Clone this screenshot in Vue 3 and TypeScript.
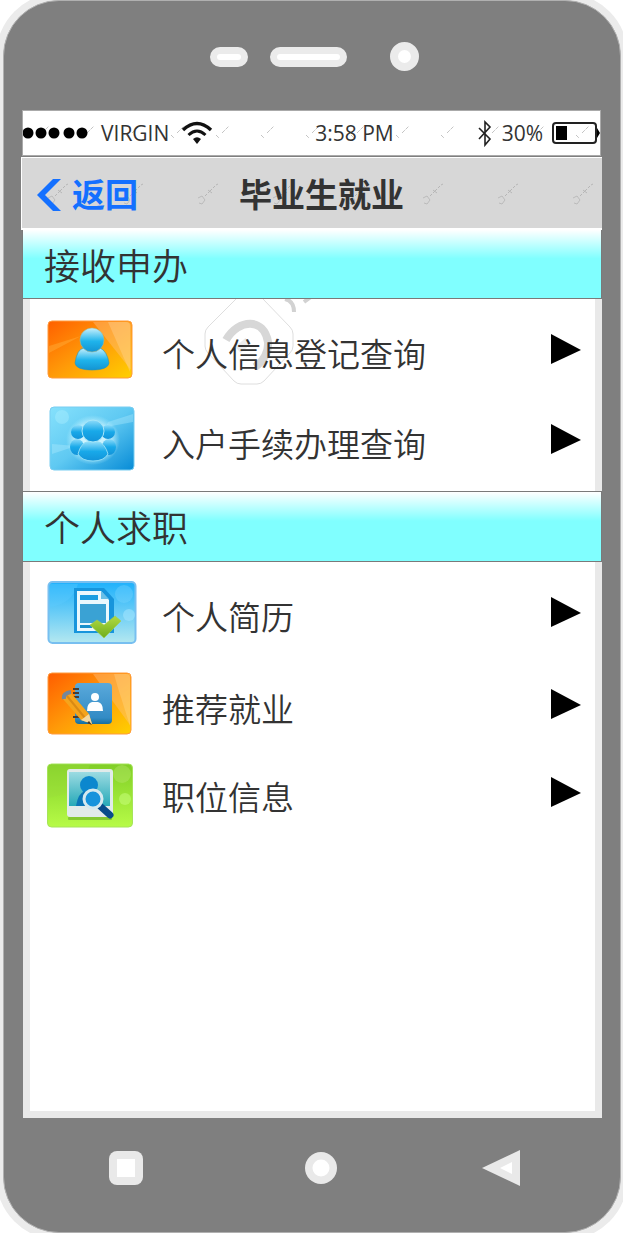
<script setup lang="ts">
interface Entry {
  id: string
  label: string
}
interface Section {
  title: string
  size: 'compact' | 'roomy'
  entries: Entry[]
}

const sections: Section[] = [
  {
    title: '接收申办',
    size: 'compact',
    entries: [
      { id: 'person', label: '个人信息登记查询' },
      { id: 'group', label: '入户手续办理查询' },
    ],
  },
  {
    title: '个人求职',
    size: 'roomy',
    entries: [
      { id: 'resume', label: '个人简历' },
      { id: 'recommend', label: '推荐就业' },
      { id: 'position', label: '职位信息' },
    ],
  },
]
</script>

<template>
  <div class="stage">
    <div class="phone">
      <div class="bezel-top">
        <span class="slot short"></span>
        <span class="slot long"></span>
        <span class="lens"></span>
      </div>

      <main class="screen">
        <div class="status">
          <svg class="marks" aria-hidden="true">
            <defs>
              <pattern id="ticks" width="45" height="44" patternUnits="userSpaceOnUse" x="12" y="0">
                <path d="M1 24l3 3M7 22l7-7" stroke="#c4c4c4" stroke-width="1" stroke-dasharray="4 1" fill="none" />
              </pattern>
            </defs>
            <rect width="100%" height="100%" fill="url(#ticks)" />
          </svg>
          <div class="carrier">
            <svg width="68" height="14" viewBox="0 0 68 14" aria-hidden="true">
              <circle cx="5" cy="7" r="5.5" /><circle cx="18" cy="7" r="5.5" /><circle cx="31" cy="7" r="5.5" />
              <circle cx="46" cy="7" r="5.5" /><circle cx="59" cy="7" r="5.5" />
            </svg>
            <span class="operator">VIRGIN</span>
            <svg width="32" height="24" viewBox="0 0 32 24" fill="none" stroke="#111" aria-hidden="true">
              <path d="M2 9Q16-4 30 9" stroke-width="3.4" />
              <path d="M7.500 14Q16 6 24.500 14" stroke-width="3" />
              <path d="M16 23l-4-5q4-3.500 8 0z" fill="#111" stroke="none" />
            </svg>
          </div>
          <span class="clock">3:58 PM</span>
          <div class="power">
            <svg width="16" height="27" viewBox="0 0 16 27" fill="none" stroke="#222" stroke-width="1.600" aria-hidden="true">
              <path d="M2 8l11 11-5 6V2l5 5L2 19" />
            </svg>
            <span>30%</span>
            <svg width="48" height="24" viewBox="0 0 48 24" aria-hidden="true">
              <rect x="1" y="2" width="43" height="20" rx="3" fill="none" stroke="#222" stroke-width="2" />
              <rect x="4" y="5" width="11" height="14" fill="#000" />
              <path d="M45 7l3 5-3 5z" fill="#000" />
            </svg>
          </div>
        </div>

        <header class="nav">
          <svg class="marks" aria-hidden="true">
            <defs>
              <pattern id="dots" width="75" height="72" patternUnits="userSpaceOnUse" x="25" y="1">
                <path d="M1 39l4-2 3 4-3 4-3-1" stroke="#bababa" fill="none" />
                <path d="M8 37l2-2M11 34l4-4M11 31l4 3M16 29l2-2M19 26l2-1" stroke="#b6b6b6" fill="none" />
              </pattern>
            </defs>
            <rect width="100%" height="100%" fill="url(#dots)" />
          </svg>
          <button type="button" class="back">
            <svg width="26" height="34" viewBox="0 0 26 34" aria-hidden="true">
              <path d="M17 1h8L9 17l16 16h-8L1 17z" fill="#1470ff" />
            </svg>
            <span>返回</span>
          </button>
          <h1>毕业生就业</h1>
        </header>

        <section v-for="section in sections" :key="section.title" :class="section.size">
          <h2>{{ section.title }}</h2>
          <nav class="list" :aria-label="section.title">
            <svg v-if="section.size === 'compact'" class="emblem" width="130" height="90" viewBox="0 0 130 90" aria-hidden="true">
              <path d="M41 0L13 28Q10 31 10 35V47Q10 51 13 54L39 82Q42 85 46 85H62Q66 85 69 82L95 54Q98 51 98 47V35Q98 31 95 28L68 0" fill="none" stroke="#dedede" />
              <path d="M31 41C44 19 69 19 73 43Q74 58 60 68" fill="none" stroke="#d7d7d7" stroke-width="8" />
              <path d="M43 51l10-9" stroke="#ececec" stroke-width="8" />
              <path d="M90 0q9 2 9 13M109 3l8-6" fill="none" stroke="#d2d2d2" stroke-width="4" />
            </svg>
            <a v-for="entry in section.entries" :key="entry.id" href="#" class="row" :class="entry.id">
              <svg v-if="entry.id === 'person'" class="tile" viewBox="0 0 94 72" aria-hidden="true">
                <defs>
                  <linearGradient id="orangeA" x1="0" y1="0" x2="1" y2="1">
                    <stop offset="0" stop-color="#ff6000" /><stop offset=".5" stop-color="#ff9a08" /><stop offset="1" stop-color="#ffd000" />
                  </linearGradient>
                  <linearGradient id="figureA" x1="0" y1="0" x2="0" y2="1">
                    <stop offset="0" stop-color="#c8f0fc" /><stop offset=".55" stop-color="#1fb4ec" /><stop offset="1" stop-color="#1394d2" />
                  </linearGradient>
                </defs>
                <rect x="4" y="8" width="84" height="57" rx="4" fill="url(#orangeA)" stroke="#ff9a3c" />
                <path d="M49 9h34q4 0 4 4v44z" fill="#ffc38a" opacity=".4" />
                <path d="M64 9l22 50V13q0-4-4-4z" fill="#ffd9a0" opacity=".35" />
                <path d="M5 33l32-10L5 40z" fill="#ffb340" opacity=".4" />
                <path d="M31 50Q33 36 40 35H56Q63 38 65 50Q64 57 48 57Q32 57 31 50z" fill="url(#figureA)" stroke="#2996b5" stroke-width=".6" />
                <circle cx="48" cy="27" r="12" fill="url(#figureA)" stroke="#a8b790" stroke-width=".6" />
              </svg>
              <svg v-else-if="entry.id === 'group'" class="tile" viewBox="0 0 94 72" aria-hidden="true">
                <defs>
                  <linearGradient id="sky" x1="0" y1="0" x2="1" y2="1">
                    <stop offset="0" stop-color="#86e1fc" /><stop offset=".5" stop-color="#5fc9f2" /><stop offset="1" stop-color="#078bd6" />
                  </linearGradient>
                  <linearGradient id="figureB" x1="0" y1="0" x2="0" y2="1">
                    <stop offset="0" stop-color="#8edcfa" /><stop offset=".5" stop-color="#18a9e9" /><stop offset="1" stop-color="#1293d9" />
                  </linearGradient>
                  <radialGradient id="glow"><stop offset=".6" stop-color="#d9f8ff" stop-opacity=".9" /><stop offset="1" stop-color="#b8f0ff" stop-opacity="0" /></radialGradient>
                </defs>
                <rect x="6" y="4" width="84" height="63" rx="4" fill="url(#sky)" stroke="#79cdf1" />
                <circle cx="18" cy="14" r="7" fill="#b0f0ff" opacity=".4" />
                <path d="M8 41l24 2-24 8zM64 19l25-8v8l-27 5z" fill="#b6efff" opacity=".35" />
                <ellipse cx="49" cy="37" rx="27" ry="25" fill="url(#glow)" />
                <g fill="url(#figureB)">
                  <circle cx="34" cy="29" r="7" /><circle cx="64" cy="29" r="7" />
                  <ellipse cx="33" cy="44" rx="7" ry="8" /><ellipse cx="65" cy="44" rx="7" ry="8" />
                </g>
                <path d="M34 51Q37 40 43 39H55Q61 41 64 51Q60 58 49 58T34 51z" fill="url(#figureB)" stroke="#8edcf6" />
                <circle cx="49" cy="28" r="11" fill="url(#figureB)" stroke="#a8e6f8" />
              </svg>
              <svg v-else-if="entry.id === 'resume'" class="tile" viewBox="0 0 94 72" aria-hidden="true">
                <defs>
                  <linearGradient id="water" x1="0" y1="0" x2="0" y2="1">
                    <stop offset="0" stop-color="#1eb1fc" /><stop offset="1" stop-color="#b4e8f0" />
                  </linearGradient>
                  <linearGradient id="tick" x1="0" y1="0" x2="0" y2="1">
                    <stop offset="0" stop-color="#b2da43" /><stop offset="1" stop-color="#6fae1c" />
                  </linearGradient>
                </defs>
                <rect x="4.500" y="6" width="87" height="61" rx="4" fill="url(#water)" stroke="#78bff0" stroke-width="2" />
                <path d="M6 31Q28 28 34 8H6z" fill="#5ecbff" opacity=".35" />
                <circle cx="80" cy="18" r="9" fill="#7fd6ff" opacity=".35" />
                <circle cx="85" cy="39" r="6" fill="#a9e7ff" opacity=".5" />
                <path d="M30 12H60L70 23V57H30z" fill="#1795dc" />
                <path d="M33 15H57L65 24V55H33z" fill="#eaf8fd" />
                <path d="M36 19H54V24H36z" fill="#1a9de1" /><path d="M36 28H62V47H36z" fill="#3aa2d4" />
                <path d="M36 49H48V52H36z" fill="#1890cb" /><path d="M57 15v8h8z" fill="#69bfe7" />
                <path d="M46 49L53 44 60 49 71 40 77 45 60 62z" fill="url(#tick)" stroke="#a2cf4c" stroke-width=".6" />
              </svg>
              <svg v-else-if="entry.id === 'recommend'" class="tile" viewBox="0 0 94 72" aria-hidden="true">
                <defs>
                  <linearGradient id="orangeB" x1="0" y1="0" x2="1" y2="1">
                    <stop offset="0" stop-color="#ff5d00" /><stop offset=".5" stop-color="#ff9a08" /><stop offset="1" stop-color="#ffd000" />
                  </linearGradient>
                  <linearGradient id="book" x1="0" y1="0" x2="0" y2="1">
                    <stop offset="0" stop-color="#5aa9db" /><stop offset=".85" stop-color="#328bc5" /><stop offset="1" stop-color="#146f9e" />
                  </linearGradient>
                </defs>
                <rect x="4" y="5" width="83" height="61" rx="4" fill="url(#orangeB)" stroke="#ff9a3c" />
                <path d="M49 6h33q4 0 4 4v47z" fill="#ffc38a" opacity=".4" />
                <path d="M74 20l12 38V6H70z" fill="#ffe0a0" opacity=".3" />
                <rect x="31" y="15" width="37" height="41" rx="4" fill="url(#book)" />
                <path d="M29 21h6M29 25h6M29 29h6M29 49h7" stroke="#4c3c30" stroke-width="2" />
                <circle cx="51" cy="29" r="4" fill="#fff" /><path d="M43 43q0-8 5-9h6q5 1 5 9z" fill="#fff" />
                <path d="M19 31l8-6 18 21 3 10-11-4z" fill="#f5a41c" />
                <path d="M23 28l18 22" stroke="#d98a14" stroke-width="2" />
                <path d="M37 52l8-6 3 10z" fill="#f4d9a0" /><path d="M45 53l3 4-5-2z" fill="#4c3827" />
                <path d="M20 31q-1-6 7-7" fill="none" stroke="#73879b" stroke-width="4" />
              </svg>
              <svg v-else class="tile" viewBox="0 -4 94 72" aria-hidden="true">
                <defs>
                  <linearGradient id="leaf" x1="0" y1="0" x2="0" y2="1">
                    <stop offset="0" stop-color="#80ce26" /><stop offset="1" stop-color="#b7fb47" />
                  </linearGradient>
                  <linearGradient id="photo" x1="0" y1="0" x2="0" y2="1">
                    <stop offset="0" stop-color="#9cdbe2" /><stop offset="1" stop-color="#25a9b8" />
                  </linearGradient>
                </defs>
                <rect x="3.500" y="4" width="85" height="63" rx="4" fill="url(#leaf)" stroke="#a6e45a" />
                <path d="M4 38Q36 33 46 5H8q-4 0-4 4z" fill="#9bdc3c" opacity=".4" />
                <circle cx="78" cy="14" r="9" fill="#b8e970" opacity=".4" /><circle cx="81" cy="39" r="6" fill="#caff80" opacity=".5" />
                <rect x="24" y="57" width="44" height="3" rx="1" fill="#579d20" opacity=".5" />
                <rect x="23" y="9" width="46" height="48" rx="3" fill="#e1ebea" />
                <path d="M25 12H66V46H25z" fill="url(#photo)" />
                <circle cx="45" cy="25" r="9" fill="#0b87ce" /><path d="M32 46q2-13 9-15h9q6 3 8 15z" fill="#0b76b8" />
                <path d="M56 46l10 9" stroke="#074c8b" stroke-width="7" stroke-linecap="round" />
                <circle cx="49" cy="39" r="9" fill="#1793dc" stroke="#d5e9ef" stroke-width="3" />
              </svg>
              <span class="label">{{ entry.label }}</span>
              <svg class="arrow" width="30" height="30" viewBox="0 0 30 30" aria-hidden="true"><path d="M0 0L30 16 0 30z" /></svg>
            </a>
          </nav>
        </section>
      </main>

      <div class="bezel-bottom">
        <button type="button" aria-label="最近任务">
          <svg width="34" height="34" viewBox="0 0 34 34"><rect width="34" height="34" rx="8" fill="#e9e9e9" /><rect x="8" y="8" width="18" height="18" fill="#fff" /></svg>
        </button>
        <button type="button" class="home" aria-label="主屏幕">
          <svg width="32" height="32" viewBox="0 0 32 32"><circle cx="16" cy="16" r="16" fill="#e9e9e9" /><circle cx="16" cy="16" r="8.500" fill="#fff" /></svg>
        </button>
        <button type="button" aria-label="后退">
          <svg width="38" height="36" viewBox="0 0 38 36"><path d="M0 18L38 0V36z" fill="#e9e9e9" /><path d="M18 18L30 12V24z" fill="#fff" /></svg>
        </button>
      </div>
    </div>
  </div>
</template>

<style>
body {
  margin: 0;
  background: #fff;
}
</style>

<style scoped>
* {
  box-sizing: border-box;
}
.stage {
  display: flex;
  min-height: calc(100vh - 6px);
  margin-right: 6px;
  padding: 0 2px 0 3px;
  overflow: hidden;
  font-family: "Noto Sans", "Noto Sans CJK SC", sans-serif;
  color: #333;
}
.phone {
  flex: 1;
  display: flex;
  flex-direction: column;
  padding: 0 18px 0 19px;
  background: #7f7f7f;
  border: 1px solid #b0b0b0;
  border-radius: 56px;
  box-shadow: 0 0 0 7px #ebebeb;
}
svg {
  display: block;
  flex: none;
}
button {
  margin: 0;
  padding: 0;
  border: 0;
  background: none;
  font: inherit;
  cursor: pointer;
}
.bezel-top {
  display: flex;
  align-items: center;
  justify-content: center;
  height: 109px;
  padding: 2px 0 0 4px;
}
.slot {
  height: 20px;
  margin: 0 22px 0 0;
  border: 7px solid #ebebeb;
  border-radius: 10px;
  background: #fff;
}
.short {
  width: 38px;
}
.long {
  width: 77px;
  margin-right: 43px;
}
.lens {
  width: 29px;
  height: 29px;
  border: 8px solid #ebebeb;
  border-radius: 50%;
  background: #fff;
}
.screen {
  flex: 1;
  display: flex;
  flex-direction: column;
}
.marks {
  position: absolute;
  inset: 0;
  width: 100%;
  height: 100%;
}
.status {
  position: relative;
  display: grid;
  grid-template-columns: 1fr auto 1fr;
  align-items: center;
  height: 46px;
  margin: 0 1px 0 -1px;
  background: #fff;
  border: 1px solid #aaa;
  font-family: "Open Sans", "Noto Sans", sans-serif;
  font-size: 21px;
  line-height: 28px;
}
.carrier,
.power {
  position: relative;
  display: flex;
  align-items: center;
}
.operator {
  margin: 0 12px 0 10px;
}
.clock {
  position: relative;
  padding-left: 86px;
}
.power {
  justify-content: flex-end;
  gap: 9px;
}
.nav {
  position: relative;
  display: grid;
  grid-template-columns: 1fr auto 1fr;
  align-items: center;
  height: 73px;
  margin: 1px 0 0 -2px;
  background: #d7d7d7;
  border: solid #fff;
  border-width: 1px 0 2px 1px;
}
.back {
  position: relative;
  display: flex;
  align-items: center;
  gap: 10px;
  padding: 4px 0 0 14px;
  color: #1470ff;
  font-size: 33px;
  font-weight: 700;
  line-height: 40px;
}
h1 {
  position: relative;
  margin: 0;
  padding: 4px 0 0 19px;
  font-size: 33px;
  font-weight: 700;
  line-height: 40px;
}
section {
  display: flex;
  flex-direction: column;
}
.roomy {
  flex: 1;
}
h2 {
  height: 71px;
  margin: 0 0 0 -1px;
  padding: 11px 21px 0;
  border: 1px solid #7a7a7a;
  background: linear-gradient(#fff 0%, #80ffff 42%);
  font-size: 36px;
  font-weight: 350;
  line-height: 52px;
}
.compact h2 {
  height: 69px;
  border-top: 0;
}
.list {
  position: relative;
  background: #fff;
  border: solid #e9e9e9;
  border-width: 0 7px;
}
.compact .list {
  padding: 5px 0 7px;
}
.roomy .list {
  flex: 1;
  padding-top: 4px;
  border-bottom-width: 7px;
}
.emblem {
  position: absolute;
  left: 165px;
  top: 0;
}
.row {
  position: relative;
  display: grid;
  grid-template-columns: 94px 1fr 30px;
  align-items: center;
  column-gap: 24px;
  height: 90px;
  padding: 0 14px;
  color: inherit;
  text-decoration: none;
}
.roomy .row {
  height: 92px;
}
.roomy .position {
  height: 84px;
}
.tile {
  width: 94px;
  height: 72px;
}
.label {
  padding-top: 12px;
  font-size: 33px;
  font-weight: 350;
  line-height: 44px;
}
.bezel-bottom {
  display: flex;
  align-items: center;
  justify-content: space-between;
  height: 114px;
  padding: 0 82px 14px 86px;
}
.home {
  margin-left: 16px;
}
</style>
